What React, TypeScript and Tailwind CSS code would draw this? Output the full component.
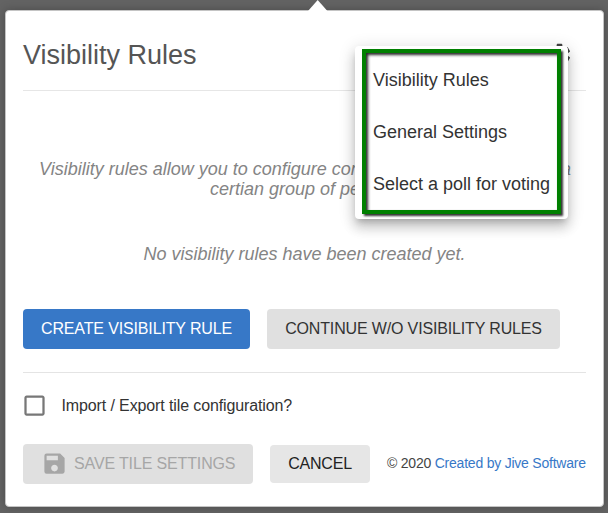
import { MdOutlineCheckBoxOutlineBlank, MdSave, MdSettings } from "react-icons/md";

const menuItems = ["Visibility Rules", "General Settings", "Select a poll for voting"];

function SettingsMenu() {
  return (
    <div className="absolute top-[46px] left-[355px] h-[173px] w-[213px] rounded-[4px] bg-white pt-[3px] pl-[7px] shadow-[0_5px_6px_-3px_rgba(0,0,0,0.2),0_9px_12px_1px_rgba(0,0,0,0.14),0_3px_16px_2px_rgba(0,0,0,0.12)]">
      <ul className="h-[165px] w-[199px] border-4 border-[#008000] pt-[1px] pl-[7px] text-[18px] text-[#333] shadow-[2px_2px_2px_rgba(0,0,0,0.8),inset_2px_2px_3px_rgba(0,0,0,0.85)]">
        {menuItems.map((item) => (
          <li key={item} className="flex h-[52px] items-center whitespace-nowrap">
            {item}
          </li>
        ))}
      </ul>
    </div>
  );
}

export default function App() {
  return (
    <div className="relative h-[513px] w-[608px] overflow-hidden bg-[#636363] pt-[10px] pl-[5px] font-['Liberation_Sans',Arial,sans-serif]">
      <svg className="absolute top-0 left-[308px] z-10" width="20" height="11" viewBox="0 0 20 11">
        <path d="M0 11 9.7 0 19.4 11Z" fill="#fff" />
      </svg>
      <main className="h-[497px] w-[599px] rounded-[4px] border border-[#c4c4c4] bg-white px-[17px] shadow-[0_0_10px_rgba(0,0,0,0.25)]">
        <header className="flex h-[80px] items-center justify-between border-b border-[#e6e6e6] pt-[8px]">
          <h1 className="text-[27px] leading-[32px] text-[#555]">Visibility Rules</h1>
          <MdSettings className="mr-[13px] size-[27px] text-[#444]" />
        </header>
        <section className="pt-[68px] text-[18px] leading-[20px] whitespace-nowrap text-[#848484] italic">
          <p className="flex justify-between pr-[15px] pl-[16px]">
            <span>Visibility rules allow you to configure con</span>
            <span>a</span>
          </p>
          <p className="pl-[187px]">certian group of pe</p>
          <p className="mt-[45px] text-center">No visibility rules have been created yet.</p>
        </section>
        <div className="mt-[45px] flex gap-[17px] text-[16px]">
          <button className="h-[40px] w-[227px] rounded-[4px] bg-[#3778c7] tracking-[-0.14px] whitespace-nowrap text-white">CREATE VISIBILITY RULE</button>
          <button className="h-[40px] w-[293px] rounded-[4px] bg-[#e0e0e0] tracking-[-0.15px] whitespace-nowrap text-[#333]">CONTINUE W/O VISIBILITY RULES</button>
        </div>
        <label className="mt-[23px] flex h-[67px] items-center border-t border-[#e4e4e4] text-[16px] text-[#333]">
          <MdOutlineCheckBoxOutlineBlank className="mb-[2px] -ml-[2px] size-[27px] text-[#777]" />
          <span className="ml-[13.5px] tracking-[-0.12px]">Import / Export tile configuration?</span>
        </label>
        <footer className="mt-[5px] flex items-center">
          <button className="flex h-[40px] w-[230px] shrink-0 items-center rounded-[4px] bg-[#e0e0e0] pl-[18px] text-[16px] whitespace-nowrap text-[#a6a6a6]">
            <MdSave className="mb-[2px] size-[27px]" />
            <span className="ml-[6px] tracking-[-0.14px]">SAVE TILE SETTINGS</span>
          </button>
          <button className="ml-[17px] h-[38px] w-[100px] shrink-0 rounded-[4px] bg-[#e6e6e6] text-[16px] tracking-[-0.2px] text-[#222]">CANCEL</button>
          <p className="mb-[2px] ml-[17px] text-[14px] tracking-[-0.22px] whitespace-nowrap text-[#444]">
            © 2020 <a className="text-[#3778c7]">Created by Jive Software</a>
          </p>
        </footer>
      </main>
      <SettingsMenu />
    </div>
  );
}
